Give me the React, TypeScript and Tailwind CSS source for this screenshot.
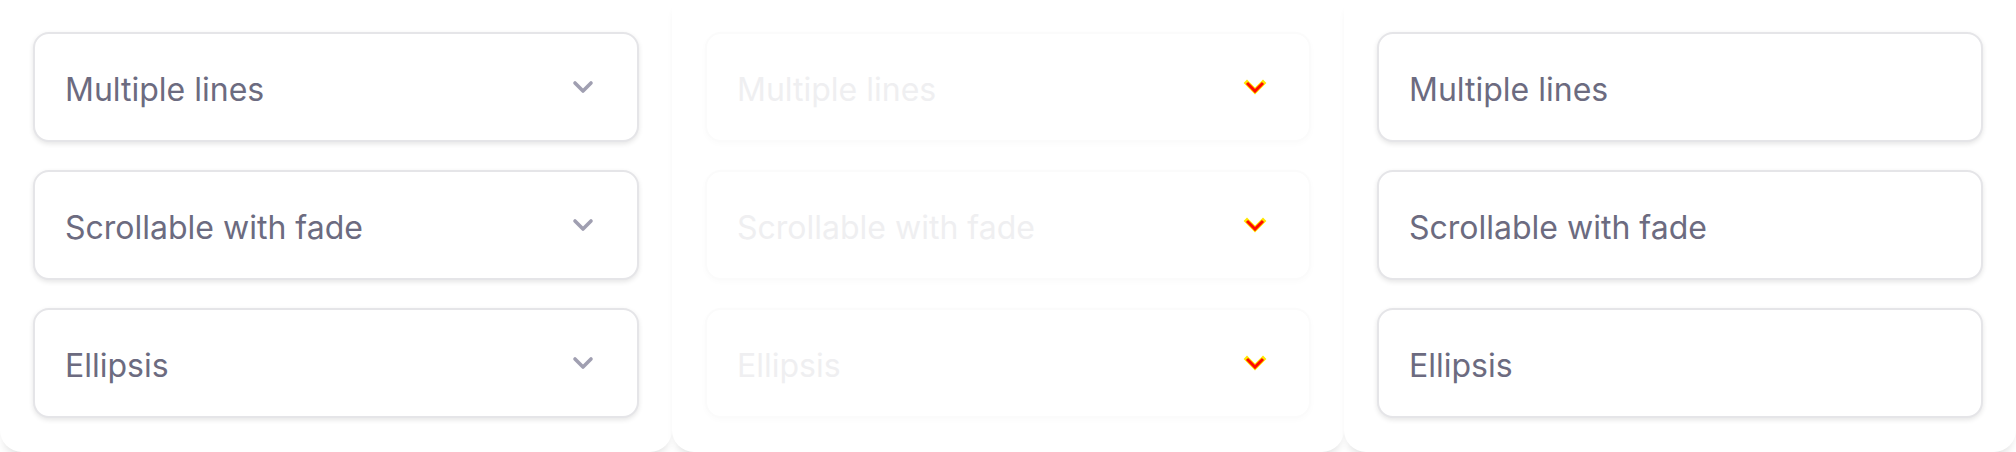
import React from "react";
import { ChevronDown } from "lucide-react";

const items = ["Multiple lines", "Scrollable with fade", "Ellipsis"];

function RedChevron() {
  return (
    <svg width="32" height="32" viewBox="0 0 24 24" fill="none" className="shrink-0">
      <path d="m6 9 6 6 6-6" stroke="#ffe600" strokeWidth="3.6" strokeLinecap="square" strokeLinejoin="miter" />
      <path d="m6 9 6 6 6-6" stroke="#ff0a00" strokeWidth="2.3" strokeLinecap="butt" strokeLinejoin="miter" />
    </svg>
  );
}

function Field({ label, variant }: { label: string; variant: "select" | "faded" | "plain" }) {
  if (variant === "faded") {
    return (
      <div className="h-[110px] flex items-center justify-between rounded-2xl border-2 border-[#fbfbfb] bg-white pl-[30px] pr-[38px] shadow-[0_2px_6px_rgba(0,0,0,0.02)]">
        <span className="pt-[5px] text-[32px] text-[#efeff1]">{label}</span>
        <RedChevron />
      </div>
    );
  }
  return (
    <div className="h-[110px] flex items-center justify-between rounded-2xl border-2 border-[#e5e5e8] bg-white pl-[30px] pr-[38px] shadow-[0_2px_5px_rgba(0,0,0,0.1)]">
      <span className="pt-[5px] text-[32px] text-[#6c6b80]">{label}</span>
      {variant === "select" && <ChevronDown size={32} strokeWidth={2.7} color="#a09fb1" />}
    </div>
  );
}

function Panel({ variant }: { variant: "select" | "faded" | "plain" }) {
  return (
    <div className="w-1/3 h-[452px] bg-white rounded-b-[22px] shadow-[0_8px_8px_-4px_rgba(0,0,0,0.12)] px-[33px] pt-8 flex flex-col gap-7">
      {items.map((it) => (
        <Field key={it} label={it} variant={variant} />
      ))}
    </div>
  );
}

export default function App() {
  return (
    <div className="w-[2016px] h-[452px] overflow-hidden bg-white flex font-['Inter',sans-serif]">
      <Panel variant="select" />
      <Panel variant="faded" />
      <Panel variant="plain" />
    </div>
  );
}
